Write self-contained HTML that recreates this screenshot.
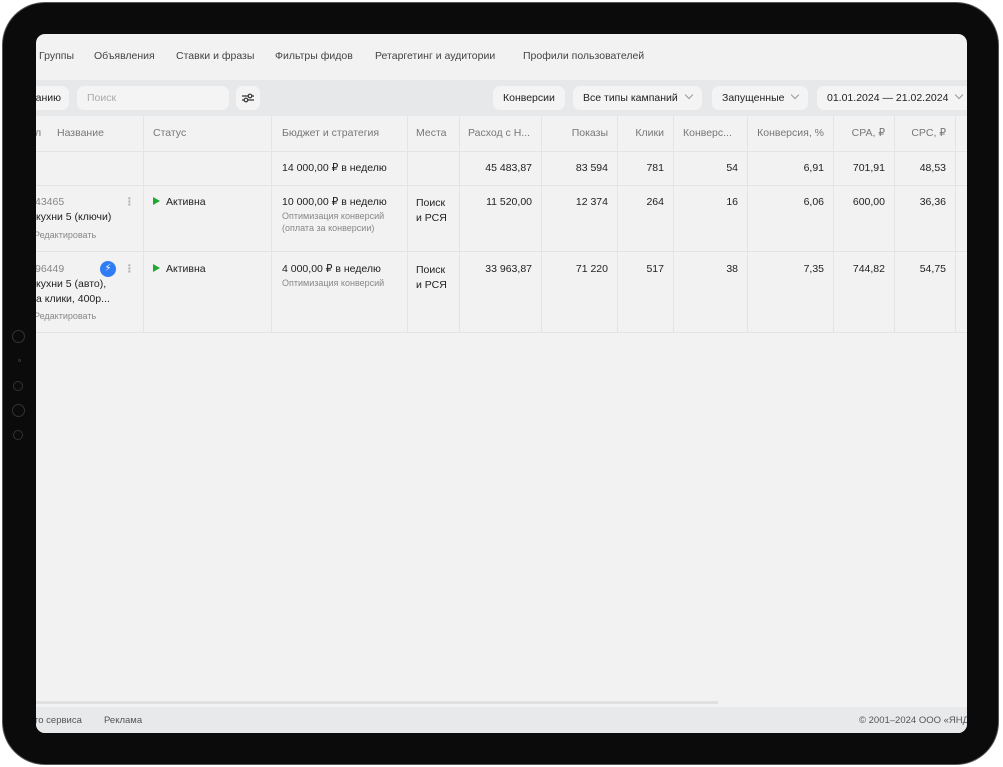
<!DOCTYPE html>
<html><head><meta charset="utf-8"><style>
*{margin:0;padding:0;box-sizing:border-box}
body{width:1003px;height:767px;background:#fff;position:relative;overflow:hidden;font-family:"Liberation Sans","DejaVu Sans",sans-serif;font-size:10.5px;color:#222}
.dev{position:absolute;left:3px;top:3px;width:995px;height:761px;background:#0b0b0b;border-radius:42px;box-shadow:0 0 0 1px #555}
.scr{position:absolute;left:36px;top:34px;width:931px;height:699px;background:#f2f2f2;border-radius:9px;overflow:hidden}
.a{position:absolute;white-space:nowrap}
.tab{top:16px;color:#444;font-size:10.5px}
.tb{position:absolute;top:46px;left:0;width:931px;height:36px;background:#e7e8ea}
.pill{position:absolute;top:6px;height:24px;background:#f4f4f5;border-radius:7px;line-height:24px;padding:0 10px;color:#222;white-space:nowrap;overflow:hidden}
.v{position:absolute;top:82px;width:1px;height:217px;background:#e4e4e4}
.h{position:absolute;left:0;width:931px;height:1px;background:#e4e4e4}
.hd{top:93px;color:#777}
.r{text-align:right}
.g{color:#888;font-size:9px}
.ch{display:inline-block;width:6px;height:6px;border-right:1px solid #999;border-bottom:1px solid #999;transform:rotate(45deg);margin-left:8px;position:relative;top:-3px}
.tri{display:inline-block;width:0;height:0;border-left:7px solid #1ea834;border-top:4px solid transparent;border-bottom:4px solid transparent;margin-right:6px}
.circ{position:absolute;border:1px solid #333;border-radius:50%}
</style></head><body>
<div class="dev">
<div class="circ" style="left:9px;top:327px;width:13px;height:13px"></div>
<div class="circ" style="left:15px;top:356px;width:3px;height:3px"></div>
<div class="circ" style="left:10px;top:378px;width:10px;height:10px"></div>
<div class="circ" style="left:9px;top:401px;width:13px;height:13px"></div>
<div class="circ" style="left:10px;top:427px;width:10px;height:10px"></div>
</div>
<div class="scr">
<div class="a tab" style="left:3px">Группы</div>
<div class="a tab" style="left:58px">Объявления</div>
<div class="a tab" style="left:140px">Ставки и фразы</div>
<div class="a tab" style="left:239px">Фильтры фидов</div>
<div class="a tab" style="left:339px">Ретаргетинг и аудитории</div>
<div class="a tab" style="left:487px">Профили пользователей</div>
<div class="tb">
<div class="pill" style="left:-10px;width:43px;padding:0;text-align:right;padding-right:8px">анию</div>
<div class="pill" style="left:41px;width:152px;color:#aaa">Поиск</div>
<div class="pill" style="left:200px;width:24px;padding:0">
<svg width="24" height="24" viewBox="0 0 24 24"><path d="M6 10h12M6 14h12" stroke="#333" stroke-width="1.3"/><circle cx="14" cy="10" r="1.8" fill="#f4f4f5" stroke="#333" stroke-width="1.2"/><circle cx="10" cy="14" r="1.8" fill="#f4f4f5" stroke="#333" stroke-width="1.2"/></svg></div>
<div class="pill" style="left:457px">Конверсии</div>
<div class="pill" style="left:537px">Все типы кампаний<span class="ch"></span></div>
<div class="pill" style="left:676px">Запущенные<span class="ch"></span></div>
<div class="pill" style="left:781px;width:160px">01.01.2024 — 21.02.2024<span class="ch"></span></div>
</div>
<div class="v" style="left:107px"></div><div class="v" style="left:235px"></div><div class="v" style="left:371px"></div><div class="v" style="left:423px"></div><div class="v" style="left:505px"></div><div class="v" style="left:581px"></div><div class="v" style="left:637px"></div><div class="v" style="left:711px"></div><div class="v" style="left:797px"></div><div class="v" style="left:858px"></div><div class="v" style="left:919px"></div>
<div class="h" style="top:117px"></div><div class="h" style="top:151px"></div><div class="h" style="top:217px"></div><div class="h" style="top:298px"></div>
<div class="a hd" style="left:-1px">л</div>
<div class="a hd" style="left:21px">Название</div>
<div class="a hd" style="left:117px">Статус</div>
<div class="a hd" style="left:246px">Бюджет и стратегия</div>
<div class="a hd" style="left:380px">Места</div>
<div class="a hd" style="left:432px">Расход с Н...</div>
<div class="a hd r" style="right:359px">Показы</div>
<div class="a hd r" style="right:303px">Клики</div>
<div class="a hd" style="left:647px">Конверс...</div>
<div class="a hd r" style="right:143px">Конверсия, %</div>
<div class="a hd r" style="right:82px">CPA, ₽</div>
<div class="a hd r" style="right:21px">CPC, ₽</div>
<div class="a" style="top:128px;left:246px">14 000,00 ₽ в неделю</div>
<div class="a r" style="top:128px;right:435px">45 483,87</div>
<div class="a r" style="top:128px;right:359px">83 594</div>
<div class="a r" style="top:128px;right:303px">781</div>
<div class="a r" style="top:128px;right:229px">54</div>
<div class="a r" style="top:128px;right:143px">6,91</div>
<div class="a r" style="top:128px;right:82px">701,91</div>
<div class="a r" style="top:128px;right:21px">48,53</div>
<div class="a" style="top:162px;left:-1px;color:#888">43465</div>
<div class="a" style="top:162px;left:88px;color:#aaa;font-weight:bold">⋮</div>
<div class="a" style="top:177px;left:0">кухни 5 (ключи)</div>
<div class="a g" style="top:196px;left:-2px">Редактировать</div>
<div class="a" style="top:162px;left:117px"><span class="tri"></span>Активна</div>
<div class="a" style="top:162px;left:246px">10 000,00 ₽ в неделю</div>
<div class="a g" style="top:177px;left:246px">Оптимизация конверсий</div>
<div class="a g" style="top:189px;left:246px">(оплата за конверсии)</div>
<div class="a" style="top:162px;left:380px;line-height:15px">Поиск<br>и РСЯ</div>
<div class="a r" style="top:162px;right:435px">11 520,00</div>
<div class="a r" style="top:162px;right:359px">12 374</div>
<div class="a r" style="top:162px;right:303px">264</div>
<div class="a r" style="top:162px;right:229px">16</div>
<div class="a r" style="top:162px;right:143px">6,06</div>
<div class="a r" style="top:162px;right:82px">600,00</div>
<div class="a r" style="top:162px;right:21px">36,36</div>
<div class="a" style="top:229px;left:-1px;color:#888">96449</div>
<div class="a" style="top:227px;left:64px;width:16px;height:16px;border-radius:50%;background:#2f7df6;color:#fff;font-size:10px;text-align:center;line-height:16px">⚡</div>
<div class="a" style="top:229px;left:88px;color:#aaa;font-weight:bold">⋮</div>
<div class="a" style="top:244px;left:0">кухни 5 (авто),</div>
<div class="a" style="top:259px;left:0">а клики, 400р...</div>
<div class="a g" style="top:277px;left:-2px">Редактировать</div>
<div class="a" style="top:229px;left:117px"><span class="tri"></span>Активна</div>
<div class="a" style="top:229px;left:246px">4 000,00 ₽ в неделю</div>
<div class="a g" style="top:244px;left:246px">Оптимизация конверсий</div>
<div class="a" style="top:229px;left:380px;line-height:15px">Поиск<br>и РСЯ</div>
<div class="a r" style="top:229px;right:435px">33 963,87</div>
<div class="a r" style="top:229px;right:359px">71 220</div>
<div class="a r" style="top:229px;right:303px">517</div>
<div class="a r" style="top:229px;right:229px">38</div>
<div class="a r" style="top:229px;right:143px">7,35</div>
<div class="a r" style="top:229px;right:82px">744,82</div>
<div class="a r" style="top:229px;right:21px">54,75</div>
<div class="a" style="left:0;top:667px;width:682px;height:3px;background:#e0e0e0"></div>
<div class="a" style="left:0;top:673px;width:931px;height:26px;background:#e8e9eb"></div>
<div class="a" style="top:681px;left:-1px;font-size:9.5px;color:#555">го сервиса</div>
<div class="a" style="top:681px;left:68px;font-size:9.5px;color:#555">Реклама</div>
<div class="a" style="top:681px;left:823px;font-size:9.5px;color:#555">© 2001–2024 ООО «ЯНД</div>
</div>
</body></html>
